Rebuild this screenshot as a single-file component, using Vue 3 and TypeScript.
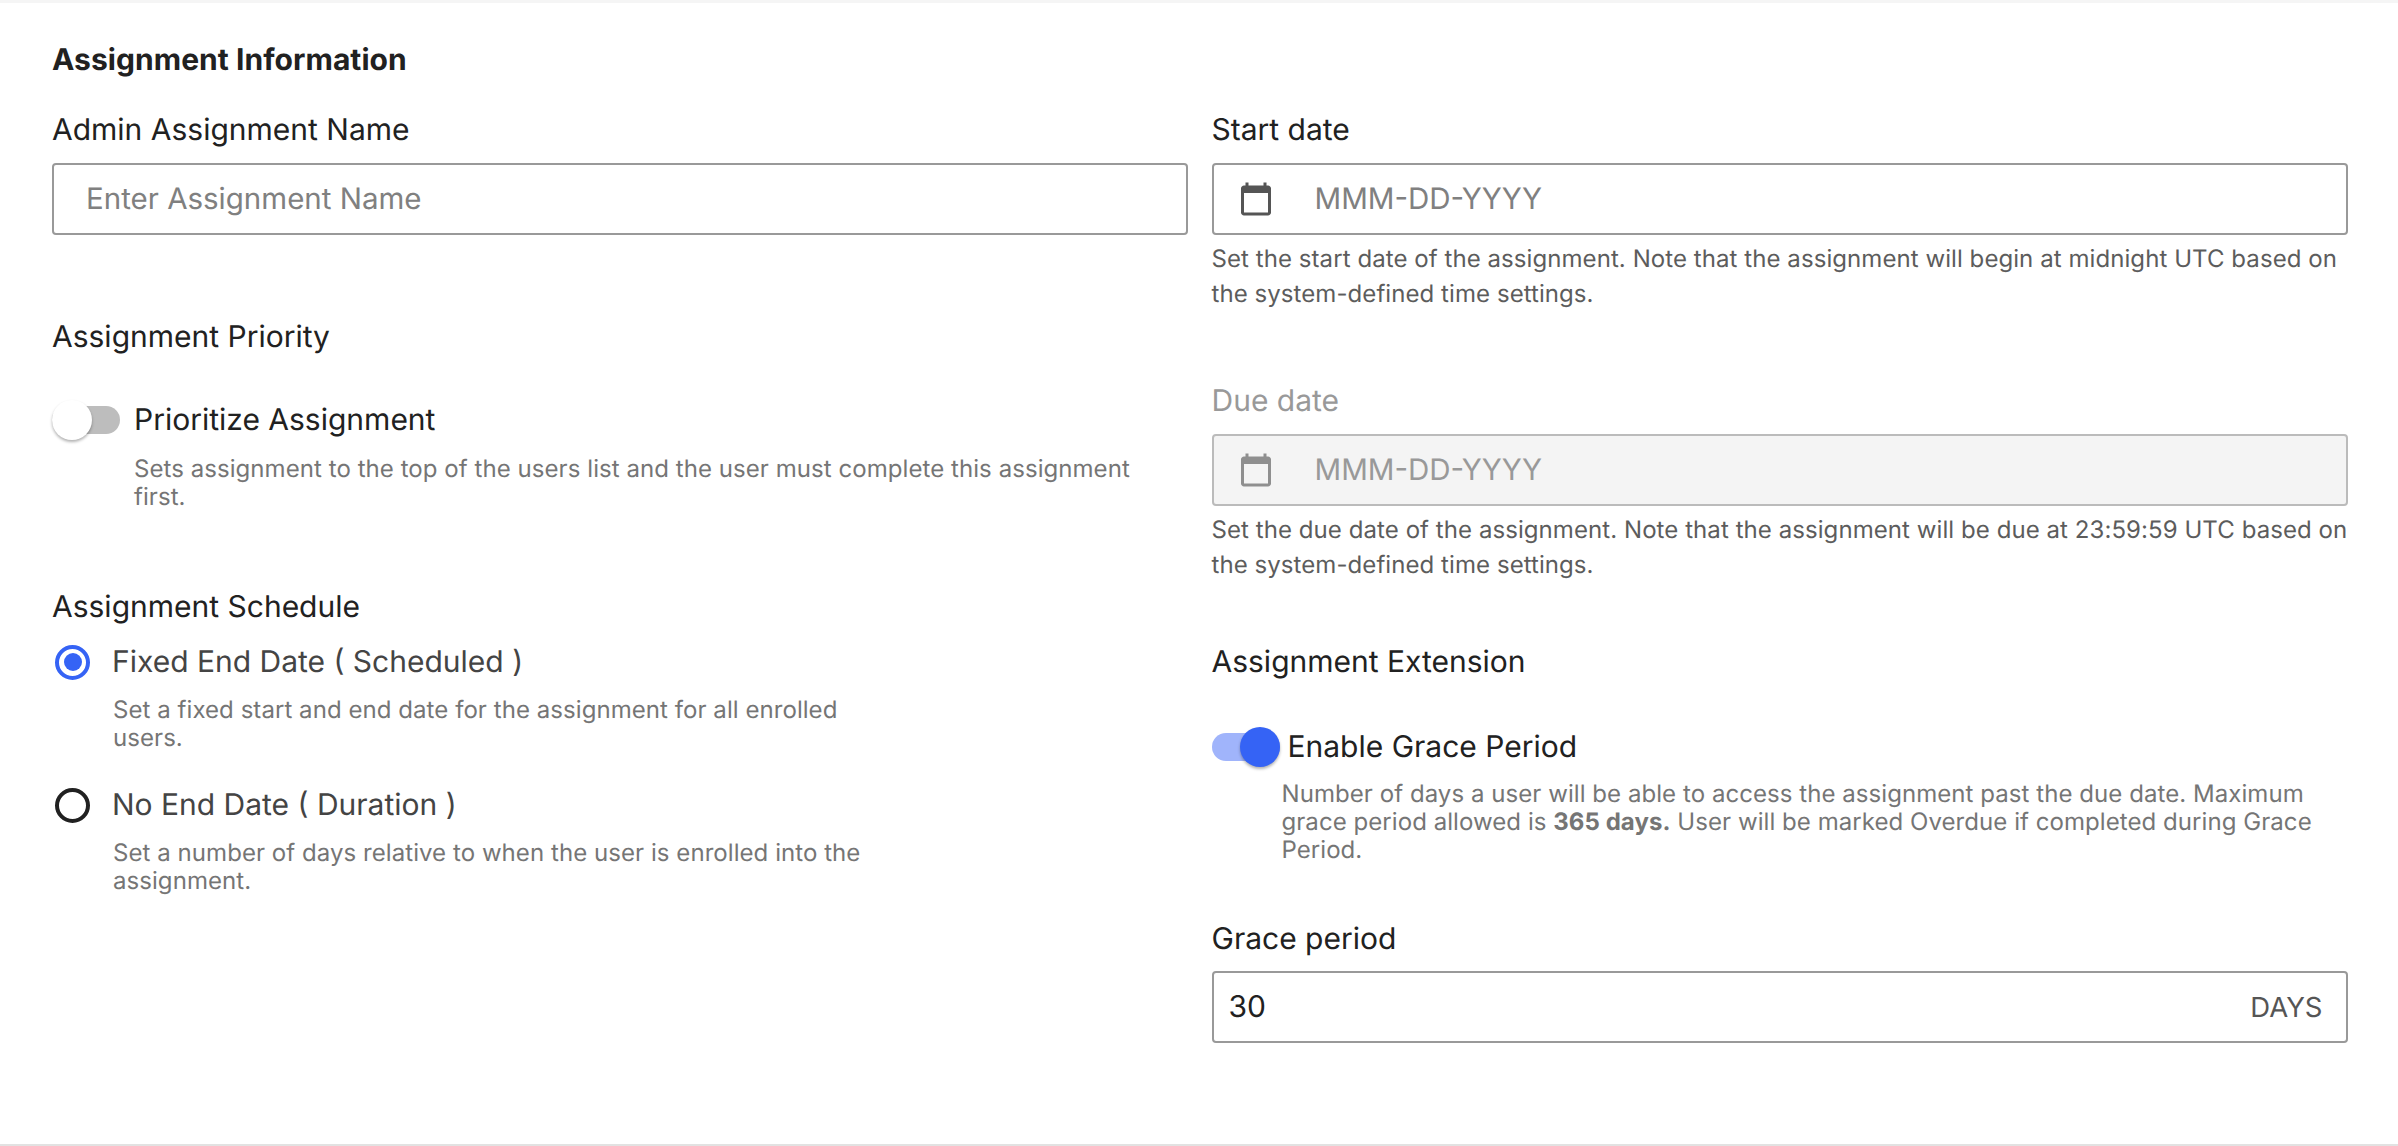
<script setup lang="ts">
const calendarPath = 'M20 3h-1V1h-2v2H7V1H5v2H4c-1.1 0-2 .9-2 2v16c0 1.1.9 2 2 2h16c1.1 0 2-.9 2-2V5c0-1.1-.9-2-2-2zm0 18H4V8h16v13z'
</script>

<template>
  <main class="page">
    <h1 class="title">Assignment Information</h1>
    <div class="columns">
      <section class="col">
        <label class="label">Admin Assignment Name</label>
        <div class="field"><input class="input name" placeholder="Enter Assignment Name" /></div>

        <div class="label priority">Assignment Priority</div>
        <div class="switch-row off-row">
          <span class="switch"><span class="knob"></span></span>
          <span class="switch-label">Prioritize Assignment</span>
        </div>
        <p class="desc prio-desc">Sets assignment to the top of the users list and the user must complete this assignment first.</p>

        <div class="label schedule">Assignment Schedule</div>
        <div class="radio-row first">
          <span class="radio checked"></span>
          <span class="radio-label">Fixed End Date ( Scheduled )</span>
        </div>
        <p class="desc radio-desc">Set a fixed start and end date for the assignment for all enrolled users.</p>
        <div class="radio-row second">
          <span class="radio"></span>
          <span class="radio-label">No End Date ( Duration )</span>
        </div>
        <p class="desc radio-desc">Set a number of days relative to when the user is enrolled into the assignment.</p>
      </section>

      <section class="col">
        <label class="label">Start date</label>
        <div class="field">
          <svg class="cal" viewBox="0 0 24 24"><path :d="calendarPath" /></svg>
          <input class="input date" placeholder="MMM-DD-YYYY" />
        </div>
        <p class="hint">Set the start date of the assignment. Note that the assignment will begin at midnight UTC based on the system-defined time settings.</p>

        <label class="label due muted">Due date</label>
        <div class="field">
          <svg class="cal faded" viewBox="0 0 24 24"><path :d="calendarPath" /></svg>
          <input class="input date disabled" placeholder="MMM-DD-YYYY" disabled />
        </div>
        <p class="hint">Set the due date of the assignment. Note that the assignment will be due at 23:59:59 UTC based on the system-defined time settings.</p>

        <div class="label extension">Assignment Extension</div>
        <div class="switch-row on-row">
          <span class="switch on"><span class="knob"></span></span>
          <span class="switch-label">Enable Grace Period</span>
        </div>
        <p class="desc grace-desc">Number of days a user will be able to access the assignment past the due date. Maximum grace period allowed is <b>365 days.</b> User will be marked Overdue if completed during Grace Period.</p>

        <label class="label grace">Grace period</label>
        <div class="field grace-field">
          <input class="input days" value="30" />
          <span class="suffix">DAYS</span>
        </div>
      </section>
    </div>
  </main>
</template>

<style>
html, body { margin: 0; background: #fff; }
</style>

<style scoped>
.page {
  box-sizing: border-box;
  height: 1146px;
  padding: 40px 50px 0 52px;
  font-family: Inter, "Liberation Sans", sans-serif;
  text-rendering: geometricPrecision;
  color: #212121;
  border-top: 3px solid #f5f5f5;
  border-bottom: 2px solid #e2e2e2;
  overflow: hidden;
}
.title { margin: 0; font-size: 30px; line-height: 34px; font-weight: 700; letter-spacing: .05px; }
.columns { display: grid; grid-template-columns: 1136px 1136px; column-gap: 23.5px; margin-top: 36px; }
.col { display: flex; flex-direction: column; align-items: stretch; min-width: 0; }
.label { display: block; font-size: 30px; line-height: 34px; font-weight: 400; }
.field { position: relative; margin-top: 16px; }
.grace-field { margin-top: 15px; }
.input {
  display: block; box-sizing: border-box; width: 100%; height: 72px;
  border: 2px solid #999; border-radius: 4px; background: #fff; outline: none;
  font: 400 30px Inter, "Liberation Sans", sans-serif; color: #212121;
  text-rendering: geometricPrecision;
}
.input::placeholder { color: #808080; opacity: 1; }
.name, .date { font-size: 29.5px; }
.name { padding: 0 32px; }
.date { padding: 0 0 0 101px; }
.days { padding: 0 15px; }
.disabled { background: #f4f4f4; border-color: #bbb; }
.disabled::placeholder { color: #999; }
.cal { position: absolute; left: 26px; top: 18px; width: 36px; height: 36px; fill: #555; }
.cal.faded { fill: #8f8f8f; }
.suffix { position: absolute; right: 25px; top: 22px; font-size: 27.5px; line-height: 28px; color: #555; }
.hint { margin: 6px 0 0; font-size: 24px; line-height: 35px; letter-spacing: .07px; color: #5c5c5c; }
.desc { margin: 0; font-size: 24px; line-height: 28px; letter-spacing: .06px; color: #757575; }
.desc b { font-weight: 700; }
.muted { color: #999; }
.priority { margin-top: 85px; }
.switch-row { display: flex; align-items: center; }
.off-row { margin-top: 46px; gap: 14px; }
.on-row { margin-top: 48px; gap: 8px; }
.switch { position: relative; flex: none; width: 68px; height: 28px; border-radius: 14px; background: #bdbdbd; }
.knob {
  position: absolute; left: 0; top: -6px; width: 40px; height: 40px; border-radius: 50%;
  background: #fff; box-shadow: 0 2px 3px rgba(0,0,0,.3);
}
.switch.on { background: #a0b4fb; }
.switch.on .knob { left: 28px; background: #3563f5; }
.switch-label { font-size: 30px; line-height: 40px; }
.prio-desc { margin: 15px 0 0 82px; width: 1040px; }
.schedule { margin-top: 79px; }
.radio-row { display: flex; align-items: center; gap: 22px; padding-left: 3px; }
.radio-row.first { margin-top: 20px; }
.radio-row.second { margin-top: 35px; }
.radio { box-sizing: border-box; flex: none; width: 35px; height: 35px; border: 4px solid #212121; border-radius: 50%; position: relative; }
.radio.checked { border-color: #3563f5; }
.radio.checked::after { content: ""; position: absolute; inset: 4.5px; border-radius: 50%; background: #3563f5; }
.radio-label { font-size: 30px; line-height: 36px; color: #444; }
.radio-desc { margin: 16px 0 0 61px; width: 760px; }
.due { margin-top: 73px; }
.extension { margin-top: 63px; }
.grace-desc { margin: 13px 0 0 70px; }
.grace { margin-top: 58px; }
</style>
